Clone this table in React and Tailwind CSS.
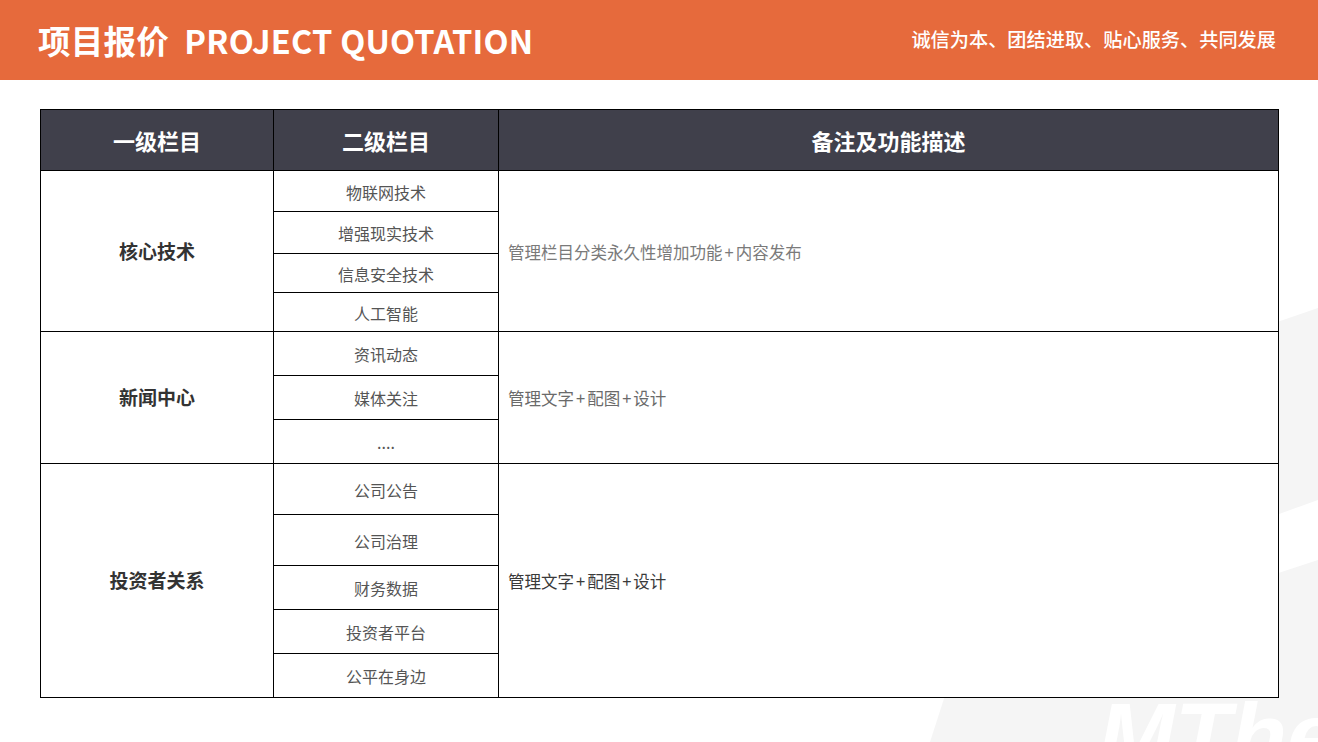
const groups = [
  {
    name: "核心技术",
    desc: ["管理栏目分类永久性增加功能", "内容发布"],
    descColor: "text-[#7a7a7a]",
    items: [
      ["物联网技术", "h-[41px]"],
      ["增强现实技术", "h-[42px]"],
      ["信息安全技术", "h-[39px]"],
      ["人工智能", "h-[38px]"],
    ],
  },
  {
    name: "新闻中心",
    desc: ["管理文字", "配图", "设计"],
    descColor: "text-[#6a6a6a]",
    items: [
      ["资讯动态", "h-[44px]"],
      ["媒体关注", "h-[44px]"],
      ["....", "h-[43px]"],
    ],
  },
  {
    name: "投资者关系",
    desc: ["管理文字", "配图", "设计"],
    descColor: "text-[#3a3a3a]",
    items: [
      ["公司公告", "h-[51px]"],
      ["公司治理", "h-[51px]"],
      ["财务数据", "h-[44px]"],
      ["投资者平台", "h-[44px]"],
      ["公平在身边", "h-[43px]"],
    ],
  },
];

const Watermark = () => (
  <svg
    className="absolute left-0 top-0 w-[1318px] h-[742px]"
    viewBox="0 0 1318 742"
    fill="none"
  >
    <path d="M1240 335 L1318 308 L1318 500 L1240 528 Z" fill="#f5f5f5" />
    <path d="M930 742 L950 680 L1318 560 L1318 742 Z" fill="#f5f5f5" />
    <text
      x="1098"
      y="768"
      fill="#ffffff"
      fontSize="92"
      fontStyle="italic"
      fontWeight="700"
      fontFamily="Liberation Sans, sans-serif"
    >
      MThe
    </text>
  </svg>
);

export default function App() {
  return (
    <div
      className="relative w-[1318px] h-[742px] overflow-hidden bg-white"
      style={{ fontFamily: '"Noto Sans CJK SC", "Noto Sans", sans-serif' }}
    >
      <header className="relative z-10 h-[80px] bg-[#e66a3c] flex items-center justify-between pl-[38px] pr-[42px] text-white">
        <h1 className="text-[32.6px] font-bold leading-none tracking-[0.2px]">
          项目报价&nbsp;&nbsp;PROJECT QUOTATION
        </h1>
        <p className="text-[19.2px] font-medium leading-none">
          诚信为本、团结进取、贴心服务、共同发展
        </p>
      </header>

      <Watermark />

      <div className="relative z-10 ml-[40px] mt-[29px] w-[1239px] border border-black bg-white">
        <div className="flex h-[61px] border-b border-black bg-[#40404b] text-white text-[22px] font-bold">
          <div className="w-[233px] border-r border-black flex items-center justify-center">
            一级栏目
          </div>
          <div className="w-[225px] border-r border-black flex items-center justify-center">
            二级栏目
          </div>
          <div className="flex-1 flex items-center justify-center">
            备注及功能描述
          </div>
        </div>

        {groups.map((g, gi) => (
          <div
            key={g.name}
            className={
              gi < groups.length - 1
                ? "flex border-b border-black"
                : "flex"
            }
          >
            <div className="w-[233px] border-r border-black flex items-center justify-center text-[19px] font-bold text-[#333333]">
              {g.name}
            </div>
            <div className="w-[225px] border-r border-black flex flex-col">
              {g.items.map(([label, h], i) => (
                <div
                  key={label}
                  className={
                    (i < g.items.length - 1 ? "border-b border-black " : "") +
                    h +
                    " flex items-center justify-center pt-[1px] text-[16px] text-[#555555]"
                  }
                >
                  {label}
                </div>
              ))}
            </div>
            <div
              className={
                "flex-1 flex items-center pl-[9px] pt-[2px] text-[16.5px] " +
                g.descColor
              }
            >
              {g.desc.map((part, i) => (
                <span key={part}>
                  {i > 0 && <span className="mx-[2px]">+</span>}
                  {part}
                </span>
              ))}
            </div>
          </div>
        ))}
      </div>
    </div>
  );
}
